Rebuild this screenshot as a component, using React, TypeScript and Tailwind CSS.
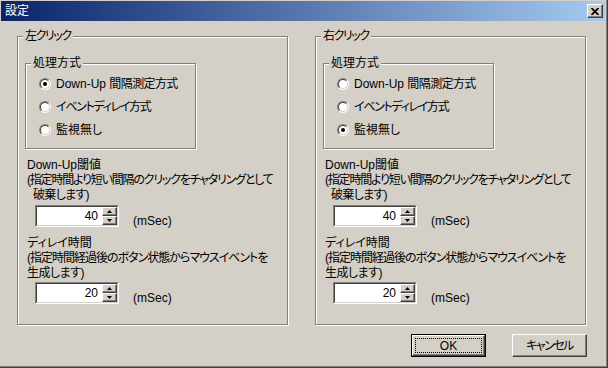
import React from 'react';

function Radio({ checked, children }: { checked: boolean; children: React.ReactNode }) {
  return (
    <div className="flex items-center h-[16px] gap-[5px]">
      <span className="w-[12px] h-[12px] rounded-full border border-t-[#808080] border-l-[#808080] border-b-white border-r-white flex">
        <span className="flex-1 rounded-full border border-t-[#404040] border-l-[#404040] border-b-[#d4d0c8] border-r-[#d4d0c8] bg-white flex items-center justify-center">
          {checked && <span className="w-[4px] h-[4px] rounded-full bg-black" />}
        </span>
      </span>
      <span className="leading-[16px] whitespace-nowrap [font-feature-settings:'palt']">{children}</span>
    </div>
  );
}

function GroupBox({ label, className, children }: { label: React.ReactNode; className: string; children: React.ReactNode }) {
  return (
    <div className={`relative border border-[#808080] shadow-[inset_1px_1px_0_#fff,1px_1px_0_#fff] ${className}`}>
      <span className="absolute left-[5px] top-[-8px] px-[2px] bg-[#d4d0c8] leading-[14px] whitespace-nowrap [font-feature-settings:'palt']">{label}</span>
      {children}
    </div>
  );
}

function SpinBtn({ up }: { up?: boolean }) {
  return (
    <div className="h-[9px] border border-t-white border-l-white border-b-[#404040] border-r-[#404040] shadow-[inset_-1px_-1px_0_#808080] bg-[#d4d0c8] flex items-center justify-center">
      <svg width="5" height="3" viewBox="0 0 5 3">
        {up ? <path d="M2.5 0 L5 3 L0 3 Z" fill="#000" /> : <path d="M0 0 L5 0 L2.5 3 Z" fill="#000" />}
      </svg>
    </div>
  );
}

function SpinBox({ value }: { value: number }) {
  return (
    <div className="flex ml-[10px]">
      <div className="w-[84px] h-[22px] border border-t-[#808080] border-l-[#808080] border-b-white border-r-white">
        <div className="h-full border border-t-[#404040] border-l-[#404040] border-b-[#d4d0c8] border-r-[#d4d0c8] bg-white flex">
          <span className="flex-1 text-right pr-[4px] leading-[18px]">{value}</span>
          <div className="w-[15px] flex flex-col">
            <SpinBtn up />
            <SpinBtn />
          </div>
        </div>
      </div>
      <span className="ml-[14px] self-end leading-[12px]">(mSec)</span>
    </div>
  );
}

function ClickGroup({ label, checked }: { label: string; checked: number }) {
  return (
    <GroupBox label={<span className="tracking-[-1.4px]">{label}</span>} className="w-[271px] h-[289px] pl-[7px] pt-[26px]">
      <GroupBox label="処理方式" className="w-[171px] h-[86px] pl-[13px] pt-[12px] flex flex-col gap-[7px]">
        <Radio checked={checked === 0}>
          Down-Up <span className="tracking-[-0.6px]">間隔測定方式</span>
        </Radio>
        <Radio checked={checked === 1}>
          <span className="tracking-[-1.3px]">イベントディレイ方式</span>
        </Radio>
        <Radio checked={checked === 2}>監視無し</Radio>
      </GroupBox>
      <div className="mt-[9px] pl-[2px] leading-[15px] whitespace-nowrap [font-feature-settings:'palt']">
        <div>Down-Up閾値</div>
        <div className="tracking-[-1.2px]">(指定時間より短い間隔のクリックをチャタリングとして</div>
        <div className="pl-[6px] tracking-[-0.7px]">破棄します)</div>
      </div>
      <div className="mt-[2px]">
        <SpinBox value={40} />
      </div>
      <div className="mt-[9px] pl-[2px] leading-[15px] whitespace-nowrap [font-feature-settings:'palt']">
        <div>ディレイ時間</div>
        <div className="tracking-[-1px]">(指定時間経過後のボタン状態からマウスイベントを</div>
        <div className="tracking-[-0.5px]">生成します)</div>
      </div>
      <div className="mt-[1px]">
        <SpinBox value={20} />
      </div>
    </GroupBox>
  );
}

export default function App() {
  return (
    <div className="w-[608px] h-[368px] bg-[#d4d0c8] border-r border-b border-[#404040] text-[12px] text-black font-['Liberation_Sans','Noto_Sans_CJK_JP',sans-serif]">
      <div className="h-full border-r border-b border-[#808080] pt-px pl-px pr-px flex flex-col">
        {/* Title bar */}
        <div className="h-[20px] flex items-center justify-between pl-[4px] pr-[2px] bg-[linear-gradient(to_right,#0a246a,#a6caf0)]">
          <span className="text-white leading-[14px]">設定</span>
          <div className="w-[16px] h-[14px] border border-t-white border-l-white border-b-[#404040] border-r-[#404040] shadow-[inset_-1px_-1px_0_#808080] bg-[#d4d0c8] flex items-center justify-center">
            <svg width="8" height="7" viewBox="0 0 8 7">
              <path d="M0.5 0 L7.5 7 M7.5 0 L0.5 7" stroke="#000" strokeWidth="1.8" />
            </svg>
          </div>
        </div>

        {/* Content */}
        <div className="pl-[16px] pt-[15px]">
          <div className="flex gap-[27px]">
            <ClickGroup label="左クリック" checked={0} />
            <ClickGroup label="右クリック" checked={2} />
          </div>
          <div className="flex gap-[26px] pl-[394px] mt-[9px]">
            <button className="w-[75px] h-[23px] border border-black bg-[#d4d0c8] p-0">
              <div className="h-full border border-t-white border-l-white border-b-[#404040] border-r-[#404040] shadow-[inset_-1px_-1px_0_#808080] p-[2px]">
                <div className="h-full border border-dotted border-black flex items-center justify-center leading-[14px]">OK</div>
              </div>
            </button>
            <button className="w-[75px] h-[23px] border border-t-white border-l-white border-b-[#404040] border-r-[#404040] shadow-[inset_-1px_-1px_0_#808080] bg-[#d4d0c8] flex items-center justify-center leading-[14px] tracking-[-1.5px] [font-feature-settings:'palt']">
              キャンセル
            </button>
          </div>
        </div>
      </div>
    </div>
  );
}
